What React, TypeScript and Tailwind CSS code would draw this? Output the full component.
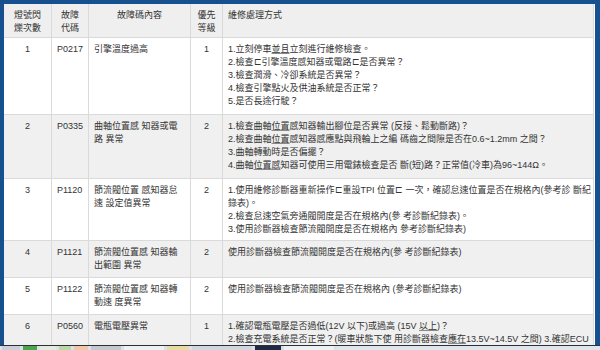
import type { ReactNode } from "react";

type Row = {
    no: string;
    code: string;
    desc: ReactNode[];
    level: string;
    fix: ReactNode[];
    bg: string;
    h: string;
};

const U = ({ children }: { children: ReactNode }) => (
    <span className="underline decoration-[#8a8a8a] underline-offset-[1px]">{children}</span>
);

const rows: Row[] = [
    {
        no: "1",
        code: "P0217",
        desc: ["引擎溫度過高"],
        level: "1",
        bg: "bg-white",
        h: "h-[77px]",
        fix: [
            <>1.立刻停車<U>並且</U>立刻進行維修檢查。</>,
            "2.檢查⊏引擎溫度感知器或電路⊏是否異常？",
            "3.檢查潤滑、冷卻系統是否異常？",
            "4.檢查引擎點火及供油系統是否正常？",
            "5.是否長途行駛？",
        ],
    },
    {
        no: "2",
        code: "P0335",
        desc: ["曲軸位置感 知器或電", "路 異常"],
        level: "2",
        bg: "bg-[#f0f0f0]",
        h: "h-[64px]",
        fix: [
            <>1.檢查曲軸<U>位置</U>感知器輸出腳位是否異常 (反接、鬆動斷路)？</>,
            <>2.檢查曲軸<U>位置</U>感知器感應點與飛輪上之編 碼齒之間隙是否在0.6~1.2mm 之間？</>,
            "3.曲軸轉動時是否偏擺？",
            <>4.曲軸<U>位置感</U>知器可使用三用電錶檢查是否 斷(短)路？正常值(冷車)為96~144Ω。</>,
        ],
    },
    {
        no: "3",
        code: "P1120",
        desc: ["節流閥位置 感知器怠", "速 設定值異常"],
        level: "2",
        bg: "bg-white",
        h: "h-[62px]",
        fix: [
            "1.使用維修診斷器重新操作⊏重設TPI 位置⊏ 一次，確認怠速位置是否在規格內(參考診 斷紀",
            "錄表)。",
            "2.檢查怠速空氣旁通閥開度是否在規格內(參 考診斷紀錄表)。",
            "3.使用診斷器檢查節流閥開度是否在規格內 參考診斷紀錄表)",
        ],
    },
    {
        no: "4",
        code: "P1121",
        desc: ["節流閥位置感 知器輸", "出範圍 異常"],
        level: "2",
        bg: "bg-[#f0f0f0]",
        h: "h-[37px]",
        fix: ["使用診斷器檢查節流閥開度是否在規格內(參 考診斷紀錄表)"],
    },
    {
        no: "5",
        code: "P1122",
        desc: ["節流閥位置感 知器轉", "動速 度異常"],
        level: "2",
        bg: "bg-white",
        h: "h-[37px]",
        fix: ["使用診斷器檢查節流閥開度是否在規格內 (參考診斷紀錄表)"],
    },
    {
        no: "6",
        code: "P0560",
        desc: ["電瓶電壓異常"],
        level: "1",
        bg: "bg-[#f0f0f0]",
        h: "h-[40px]",
        fix: [
            <>1.確認電瓶電壓是否過低(12V 以下)或過高 (15V <U>以上</U>)？</>,
            <>2.檢查充電系統是否正常？(暖車狀態下使 用診斷器檢查<U>應在</U>13.5V~14.5V 之間) 3.確認ECU</>,
        ],
    },
];

const Lines = ({ items }: { items: ReactNode[] }) => (
    <>
        {items.map((t, i) => (
            <div key={i}>{t}</div>
        ))}
    </>
);

const cell = "border border-[#dadada] align-top pt-[5px] px-[5px] whitespace-nowrap";

export default function App() {
    return (
        <div
            className="w-[600px] h-[350px] bg-[#17508f] flex flex-col overflow-hidden text-[#333] text-[9px] leading-[13px]"
            style={{ fontFamily: '"Liberation Sans", "Noto Sans CJK TC", sans-serif' }}
        >
            <div className="flex-1 min-h-0 pt-[4px] pl-[4px] pr-[5px] overflow-hidden">
                <div className="bg-white h-full overflow-hidden">
                    <table className="border-collapse w-[591px] table-fixed -mt-px -ml-px">
                        <colgroup>
                            <col className="w-[48px]" />
                            <col className="w-[37px]" />
                            <col className="w-[102px]" />
                            <col className="w-[32px]" />
                            <col />
                        </colgroup>
                        <thead>
                            <tr className="h-[34px] bg-[#efefef]">
                                <th className={`${cell} pt-[3px] font-normal text-center`}>
                                    <div>燈號閃</div>
                                    <div>爍次數</div>
                                </th>
                                <th className={`${cell} pt-[3px] font-normal text-center`}>
                                    <div>故障</div>
                                    <div>代碼</div>
                                </th>
                                <th className={`${cell} pt-[3px] font-normal text-center`}>故障碼內容</th>
                                <th className={`${cell} pt-[3px] font-normal text-center`}>
                                    <div>優先</div>
                                    <div>等級</div>
                                </th>
                                <th className={`${cell} pt-[3px] font-normal text-left`}>維修處理方式</th>
                            </tr>
                        </thead>
                        <tbody>
                            {rows.map((r) => (
                                <tr key={r.no} className={`${r.bg} ${r.h}`}>
                                    <td className={`${cell} text-center`}>{r.no}</td>
                                    <td className={`${cell} text-left`}>{r.code}</td>
                                    <td className={`${cell} text-left`}>
                                        <Lines items={r.desc} />
                                    </td>
                                    <td className={`${cell} text-center`}>{r.level}</td>
                                    <td className={`${cell} text-left`}>
                                        <Lines items={r.fix} />
                                    </td>
                                </tr>
                            ))}
                        </tbody>
                    </table>
                </div>
            </div>
            <div className="h-[5px] shrink-0 bg-[#d9e2ec] border-t border-[#2a2f38] flex items-stretch gap-[3px] pl-[2px]">
                <div className="w-[18px] bg-[#c8cfd8]" />
                <div className="w-[14px] bg-[#4aa64a]" />
                <div className="w-[16px] bg-[#e4eadf]" />
                <div className="w-[12px] bg-[#b9d9a3]" />
                <div className="w-[14px] bg-[#f0c8a8]" />
                <div className="w-[30px] bg-[#c4c9d0]" />
                <div className="w-[40px] bg-[#eef1f4]" />
                <div className="w-[22px] bg-[#e6dca0]" />
                <div className="w-[60px] bg-[#d0d6de]" />
                <div className="w-[26px] bg-[#1f2a44]" />
                <div className="w-[50px] bg-[#eef1f4]" />
                <div className="flex-1 bg-[#dfe5ec]" />
            </div>
        </div>
    );
}
